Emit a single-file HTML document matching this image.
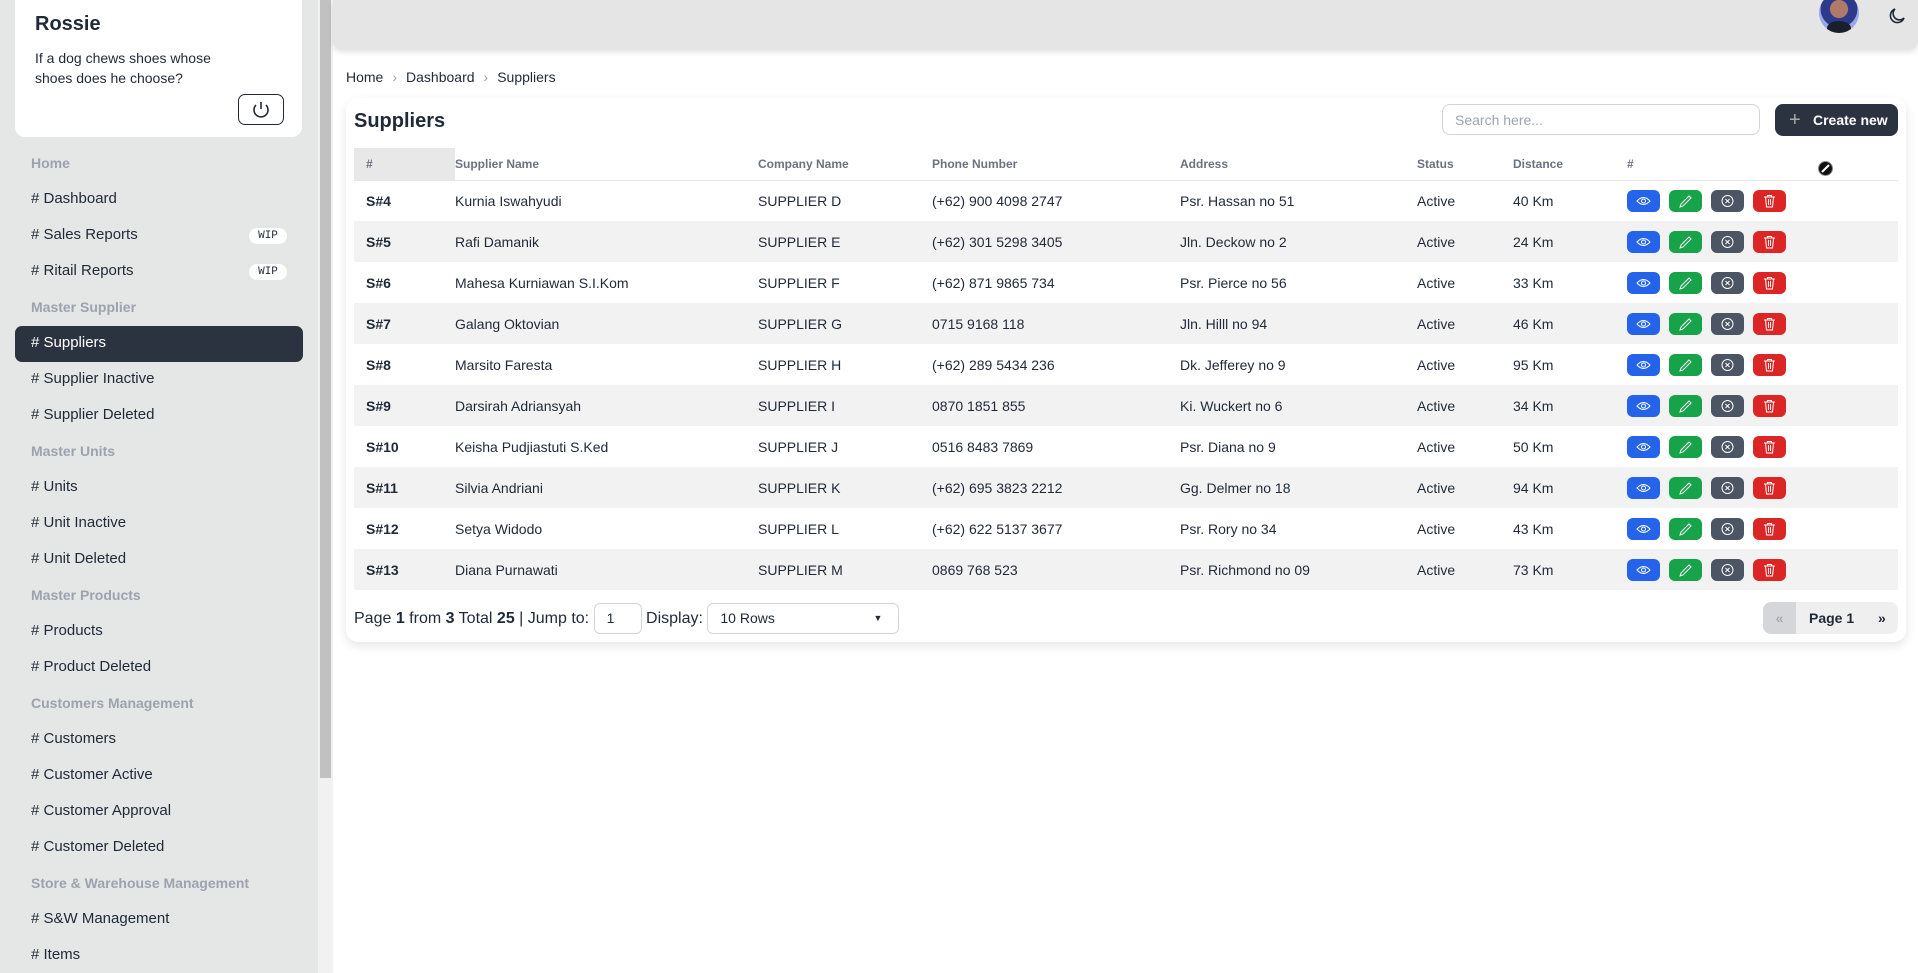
<!DOCTYPE html>
<html><head><meta charset="utf-8"><style>
*{box-sizing:border-box;margin:0;padding:0}
body{width:1918px;height:973px;overflow:hidden;background:#fff;font-family:"Liberation Sans",sans-serif;color:#1f2937;position:relative;font-size:14px}
.side{position:absolute;left:0;top:0;width:318px;height:973px;background:#e5e6e6}
.sb{position:absolute;left:318px;top:0;width:15px;height:973px;background:#f1f1f1}
.sb i{position:absolute;left:2px;top:0;width:11px;height:778px;background:#c1c1c1}
.prof{position:absolute;left:15px;top:0;width:287px;height:137px;background:#fff;border-radius:0 0 10px 10px}
.prof h1{position:absolute;left:20px;top:13px;font-size:20px;font-weight:bold;color:#1f2937}
.prof p{position:absolute;left:20px;top:48px;font-size:14px;line-height:20px;color:#1f2937;width:210px}
.pw{position:absolute;left:223px;top:94px;width:46px;height:31px;border:1.5px solid #1f2937;border-radius:7px}
.it{position:absolute;left:31px;font-size:15px;color:#1f2937}
.sec{position:absolute;left:31px;font-size:14px;font-weight:bold;color:#9ca3af}
.wip{position:absolute;left:249px;width:38px;height:16px;background:#fff;border-radius:8px;font-family:"Liberation Mono",monospace;font-size:11px;text-align:center;line-height:16px}
.act{position:absolute;left:15px;top:326px;width:288px;height:36px;background:#2b3340;border-radius:7px}
.hdr{position:absolute;left:333px;top:0;width:1585px;height:49px;background:#e5e5e5;box-shadow:0 3px 6px rgba(0,0,0,.12);border-radius:0 0 8px 8px}
.av{position:absolute;left:1486px;top:-7px;width:40px;height:40px;border-radius:50%;background:radial-gradient(circle at 50% 40%,#b07a6a 0 28%,#2d3a8a 30% 58%,#9aa8e8 60%);overflow:hidden}
.crumb{position:absolute;left:346px;top:69px;font-size:14px;color:#1f2937}
.crumb span{color:#9ca3af;margin:0 9px}
.card{position:absolute;left:346px;top:98px;width:1560px;height:544px;background:#fff;border-radius:12px;box-shadow:0 4px 10px rgba(0,0,0,.1)}
.title{position:absolute;left:354px;top:110px;font-size:20px;font-weight:bold}
.search{position:absolute;left:1442px;top:104px;width:318px;height:31px;border:1px solid #d1d5db;border-radius:8px;font-size:14px;color:#9ca3af;padding:7px 12px}
.cre{position:absolute;left:1775px;top:104px;width:123px;height:32px;background:#2b3340;border-radius:8px;color:#fff;font-weight:bold;font-size:14px;line-height:32px;padding-left:38px}
.cre b{position:absolute;left:14px;top:0;font-weight:normal;font-size:20px;color:#aaa}
table{position:absolute;left:354px;top:148px;width:1544px;border-collapse:collapse}
th{height:32px;text-align:left;font-size:12px;color:#6b7280;font-weight:bold;border-bottom:1px solid #e5e7eb;padding-left:0}
td{height:41px;font-size:14px;color:#1f2937}
tr:nth-child(even) td{background:#f2f2f2}
td:first-child,th:first-child{padding-left:12px;font-weight:bold}
th:first-child{background:#e8e8e8;font-weight:bold}
.bt{display:inline-block;width:33px;height:22px;border-radius:6px;margin-right:9px;vertical-align:middle;position:relative}
.bt svg{position:absolute;left:9px;top:4px}
.pg{position:absolute;left:354px;top:603px;font-size:16px;color:#1f2937;line-height:31px}
.box{display:inline-block;border:1px solid #d1d5db;border-radius:6px;height:31px;vertical-align:middle;font-size:14px;padding:0 12px}
.nav{position:absolute;left:1763px;top:602px;width:135px;height:32px;background:#efefef;border-radius:8px;font-weight:bold;font-size:14px;line-height:32px}
</style></head><body>
<div class="side">
<div class="prof"><h1>Rossie</h1><p>If a dog chews shoes whose shoes does he choose?</p>
<div class="pw"><svg width="44" height="28" viewBox="0 0 44 28"><path d="M22 7v7M17 10a7 7 0 1 0 10 0" fill="none" stroke="#1f2937" stroke-width="1.6"/></svg></div></div>
<div class="sec" style="top:155px">Home</div>
<div class="it" style="top:190px"># Dashboard</div>
<div class="it" style="top:226px"># Sales Reports</div><div class="wip" style="top:228px">WIP</div>
<div class="it" style="top:262px"># Ritail Reports</div><div class="wip" style="top:264px">WIP</div>
<div class="sec" style="top:299px">Master Supplier</div>
<div class="act"></div>
<div class="it" style="top:334px;color:#fff"># Suppliers</div>
<div class="it" style="top:370px"># Supplier Inactive</div>
<div class="it" style="top:406px"># Supplier Deleted</div>
<div class="sec" style="top:443px">Master Units</div>
<div class="it" style="top:478px"># Units</div>
<div class="it" style="top:514px"># Unit Inactive</div>
<div class="it" style="top:550px"># Unit Deleted</div>
<div class="sec" style="top:587px">Master Products</div>
<div class="it" style="top:622px"># Products</div>
<div class="it" style="top:658px"># Product Deleted</div>
<div class="sec" style="top:695px">Customers Management</div>
<div class="it" style="top:730px"># Customers</div>
<div class="it" style="top:766px"># Customer Active</div>
<div class="it" style="top:802px"># Customer Approval</div>
<div class="it" style="top:838px"># Customer Deleted</div>
<div class="sec" style="top:875px">Store &amp; Warehouse Management</div>
<div class="it" style="top:910px"># S&amp;W Management</div>
<div class="it" style="top:946px"># Items</div>
</div>
<div class="sb"><i></i></div>
<div class="hdr"><div class="av"><div style="position:absolute;left:8px;top:28px;width:24px;height:14px;border-radius:50% 50% 0 0;background:#1a1f2e"></div></div>
<svg style="position:absolute;left:1554px;top:6px" width="20" height="20" viewBox="0 0 20 20"><path d="M8 3a7 7 0 1 0 9 9A6 6 0 0 1 8 3z" fill="none" stroke="#1f2937" stroke-width="1.6"/></svg></div>
<div class="crumb">Home<span>›</span>Dashboard<span>›</span>Suppliers</div>
<div class="card"></div>
<div class="title">Suppliers</div>
<div class="search">Search here...</div>
<div class="cre"><b>+</b>Create new</div>
<svg style="position:absolute;left:1817px;top:160px" width="17" height="17"><circle cx="8.5" cy="8.5" r="7" fill="#111" stroke="#888"/><path d="M5 12L12 5" stroke="#fff" stroke-width="2"/></svg>
<table>
<tr><th style="width:101px">#</th><th style="width:303px">Supplier Name</th><th style="width:174px">Company Name</th><th style="width:248px">Phone Number</th><th style="width:237px">Address</th><th style="width:96px">Status</th><th style="width:114px">Distance</th><th>#</th></tr>
<tbody id="tb"></tbody>
</table>
<div class="pg">Page <b>1</b> from <b>3</b> Total <b>25</b> | Jump to: <span class="box" style="width:48px;line-height:29px">1</span> Display: <span class="box" style="width:192px;line-height:29px;position:relative">10 Rows<span style="position:absolute;right:16px;top:0;font-size:9px">▼</span></span></div>
<div class="nav"><span style="position:absolute;left:0;width:33px;height:32px;background:#d5d6d9;border-radius:8px 0 0 8px;text-align:center;color:#aaa">«</span><span style="position:absolute;left:46px">Page 1</span><span style="position:absolute;left:115px">»</span></div>
<script>
var d=[["S#4","Kurnia Iswahyudi","SUPPLIER D","(+62) 900 4098 2747","Psr. Hassan no 51","40"],["S#5","Rafi Damanik","SUPPLIER E","(+62) 301 5298 3405","Jln. Deckow no 2","24"],["S#6","Mahesa Kurniawan S.I.Kom","SUPPLIER F","(+62) 871 9865 734","Psr. Pierce no 56","33"],["S#7","Galang Oktovian","SUPPLIER G","0715 9168 118","Jln. Hilll no 94","46"],["S#8","Marsito Faresta","SUPPLIER H","(+62) 289 5434 236","Dk. Jefferey no 9","95"],["S#9","Darsirah Adriansyah","SUPPLIER I","0870 1851 855","Ki. Wuckert no 6","34"],["S#10","Keisha Pudjiastuti S.Ked","SUPPLIER J","0516 8483 7869","Psr. Diana no 9","50"],["S#11","Silvia Andriani","SUPPLIER K","(+62) 695 3823 2212","Gg. Delmer no 18","94"],["S#12","Setya Widodo","SUPPLIER L","(+62) 622 5137 3677","Psr. Rory no 34","43"],["S#13","Diana Purnawati","SUPPLIER M","0869 768 523","Psr. Richmond no 09","73"]];
var ic='<span class="bt" style="background:#2563eb"><svg width="15" height="14"><path d="M1 7q6.5-7 13 0q-6.5 7-13 0z" fill="none" stroke="#fff"/><circle cx="7.5" cy="7" r="2" fill="none" stroke="#fff"/></svg></span><span class="bt" style="background:#16a34a"><svg width="15" height="14"><path d="M2 13l1-3 8-8 2 2-8 8z" fill="none" stroke="#fff"/></svg></span><span class="bt" style="background:#4b5563"><svg width="15" height="14"><circle cx="7.5" cy="7" r="5.5" fill="none" stroke="#fff"/><path d="M5.5 5l4 4M9.5 5l-4 4" stroke="#fff"/></svg></span><span class="bt" style="background:#dc2626"><svg width="15" height="14"><path d="M2 3h11M5.5 3V1.5h4V3M3.5 3l1 10h6l1-10M6.5 5v6M8.5 5v6" fill="none" stroke="#fff"/></svg></span>';
var h='';d.forEach(function(r){h+='<tr><td>'+r[0]+'</td><td>'+r[1]+'</td><td>'+r[2]+'</td><td>'+r[3]+'</td><td>'+r[4]+'</td><td>Active</td><td>'+r[5]+' Km</td><td>'+ic+'</td></tr>'});
document.getElementById('tb').innerHTML=h;
</script>
</body></html>
